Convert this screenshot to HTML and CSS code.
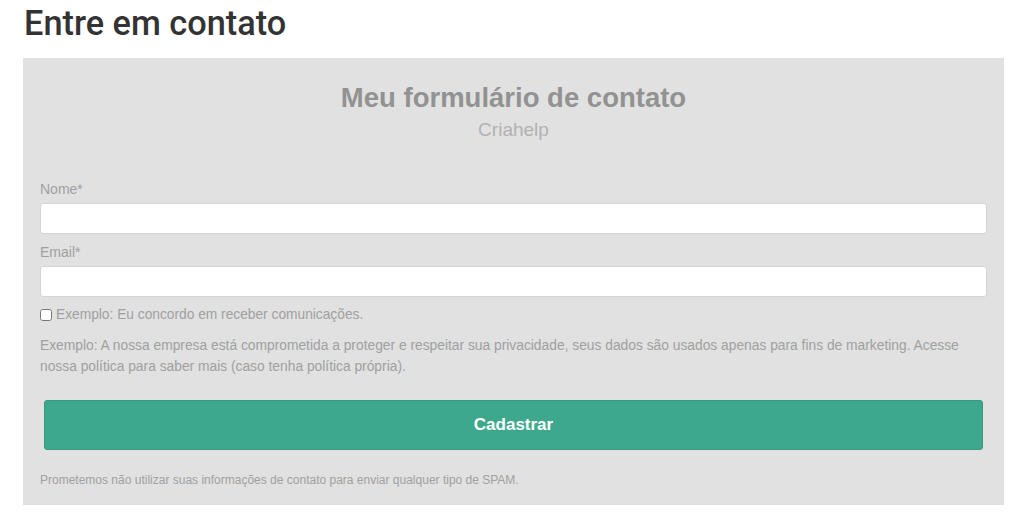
FILE: index.html
```html
<!DOCTYPE html>
<html lang="pt-BR">
<head>
  <meta charset="UTF-8" />
  <meta name="viewport" content="width=device-width, initial-scale=1.0"/>
  <title>Entre em contato</title>
  <link rel="stylesheet" href="styles.css">
</head>
<body>
  <div class="page">
    <h1 class="page-title">Entre em contato</h1>

    <form class="contact-form" onsubmit="return false">
      <div class="form-head">
        <h2 class="form-title">Meu formulário de contato</h2>
        <div class="form-sub">Criahelp</div>
      </div>

      <label class="field-label" for="nome">Nome*</label>
      <input class="field-input" id="nome" type="text">

      <label class="field-label" for="email">Email*</label>
      <input class="field-input last" id="email" type="email">

      <label class="check-row">
        <input type="checkbox">
        <span>Exemplo: Eu concordo em receber comunicações.</span>
      </label>

      <p class="privacy">Exemplo: A nossa empresa está comprometida a proteger e respeitar sua privacidade, seus dados são usados apenas para fins de marketing. Acesse nossa política para saber mais (caso tenha política própria).</p>

      <button class="submit-btn" type="submit">Cadastrar</button>

      <p class="spam-note">Prometemos não utilizar suas informações de contato para enviar qualquer tipo de SPAM.</p>
    </form>
  </div>
</body>
</html>
```

FILE: styles.css
```css
* { margin: 0; padding: 0; box-sizing: border-box; }

body {
  font-family: 'Liberation Sans', Arial, sans-serif;
  background: #fff;
  color: #333;
}

.page {
  padding: 0 20px 0 23px;
}

.page-title {
  font-family: Roboto, sans-serif;
  font-weight: 500;
  font-size: 34.3px;
  line-height: 46px;
  color: #333;
  padding-left: 1px;
  margin-bottom: 12px;
}

.contact-form {
  background: #e1e1e1;
  padding: 24px 17px 17px;
  display: flex;
  flex-direction: column;
}

.form-head {
  text-align: center;
  margin-bottom: 35px;
}

.form-title {
  font-size: 27.5px;
  font-weight: bold;
  color: #929292;
  line-height: 32px;
}

.form-sub {
  font-size: 19px;
  color: #b2b2b2;
  line-height: 28px;
  margin-top: 2px;
}

.field-label {
  font-size: 14px;
  color: #a0a0a0;
  line-height: 20px;
  margin-bottom: 4px;
}

.field-input {
  height: 31px;
  background: #fff;
  border: 1px solid #d4d4d4;
  border-radius: 3px;
  margin-bottom: 8px;
  padding: 0 8px;
}

.field-input.last {
  margin-bottom: 8px;
}

.check-row {
  display: flex;
  align-items: center;
  gap: 4px;
  font-size: 13.75px;
  color: #a0a0a0;
  line-height: 20px;
}

.check-row input {
  width: 12px;
  height: 12px;
  margin: 0;
}

.privacy {
  font-size: 13.8px;
  color: #a0a0a0;
  line-height: 21px;
  margin-top: 10px;
}

.submit-btn {
  margin: 23px 4px 0;
  height: 50px;
  background: #3ea88d;
  border: 1px solid #369a80;
  border-radius: 3px;
  color: #fff;
  font-family: 'Liberation Sans', Arial, sans-serif;
  font-weight: bold;
  font-size: 17px;
  cursor: pointer;
}

.spam-note {
  font-size: 12px;
  color: #a0a0a0;
  margin-top: 22px;
  line-height: 16px;
}
```
